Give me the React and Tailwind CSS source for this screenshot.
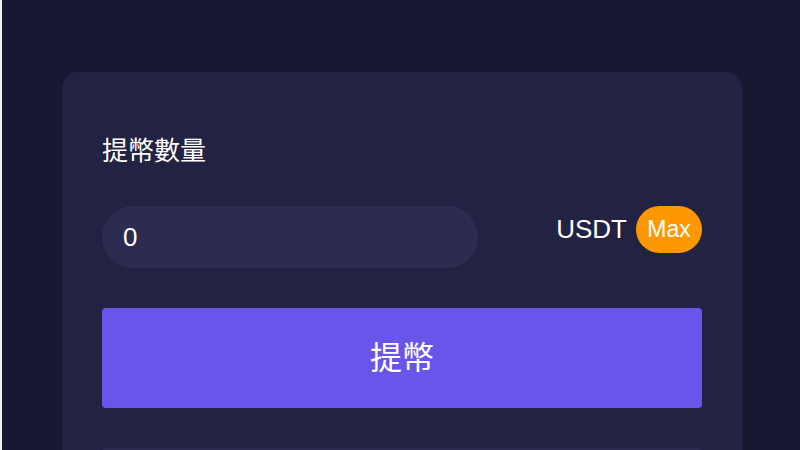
import React from 'react';

const cjk = { fontFamily: '"Liberation Sans", "Noto Sans CJK TC", sans-serif' };

const Withdraw = () => {
    return (
        <div className="w-[800px] h-[450px] overflow-hidden flex bg-[#171932]" style={cjk}>
            <div className="w-[2px] bg-[#eef0f3]"></div>
            <div className="flex-1 pl-[60px] pr-[58px] pt-[72px]">
                <div className="rounded-2xl bg-[#222243] px-10 pt-[61px] pb-10">
                    <div className="text-[26px] leading-[36px] text-white">提幣數量</div>

                    <div className="flex items-start justify-between mt-[37px]">
                        <div className="w-[376px] h-[62px] rounded-full bg-[#2c2c50] flex items-center pl-[21px]">
                            <span className="text-[26px] text-white">0</span>
                        </div>
                        <div className="flex items-center gap-[9px]">
                            <span className="text-[26px] text-white">USDT</span>
                            <button className="w-[66px] h-[47px] rounded-full bg-[#ff9800] text-white text-[23px] leading-none">Max</button>
                        </div>
                    </div>

                    <button className="w-full h-[100px] mt-[40px] rounded bg-[#6a55ea] text-white text-[32px]">提幣</button>

                    <div className="w-full h-[62px] mt-[40px] rounded-sm bg-[#2c2c50]"></div>
                </div>
            </div>
        </div>
    )
}

export default function App() {
    return <Withdraw />
}
